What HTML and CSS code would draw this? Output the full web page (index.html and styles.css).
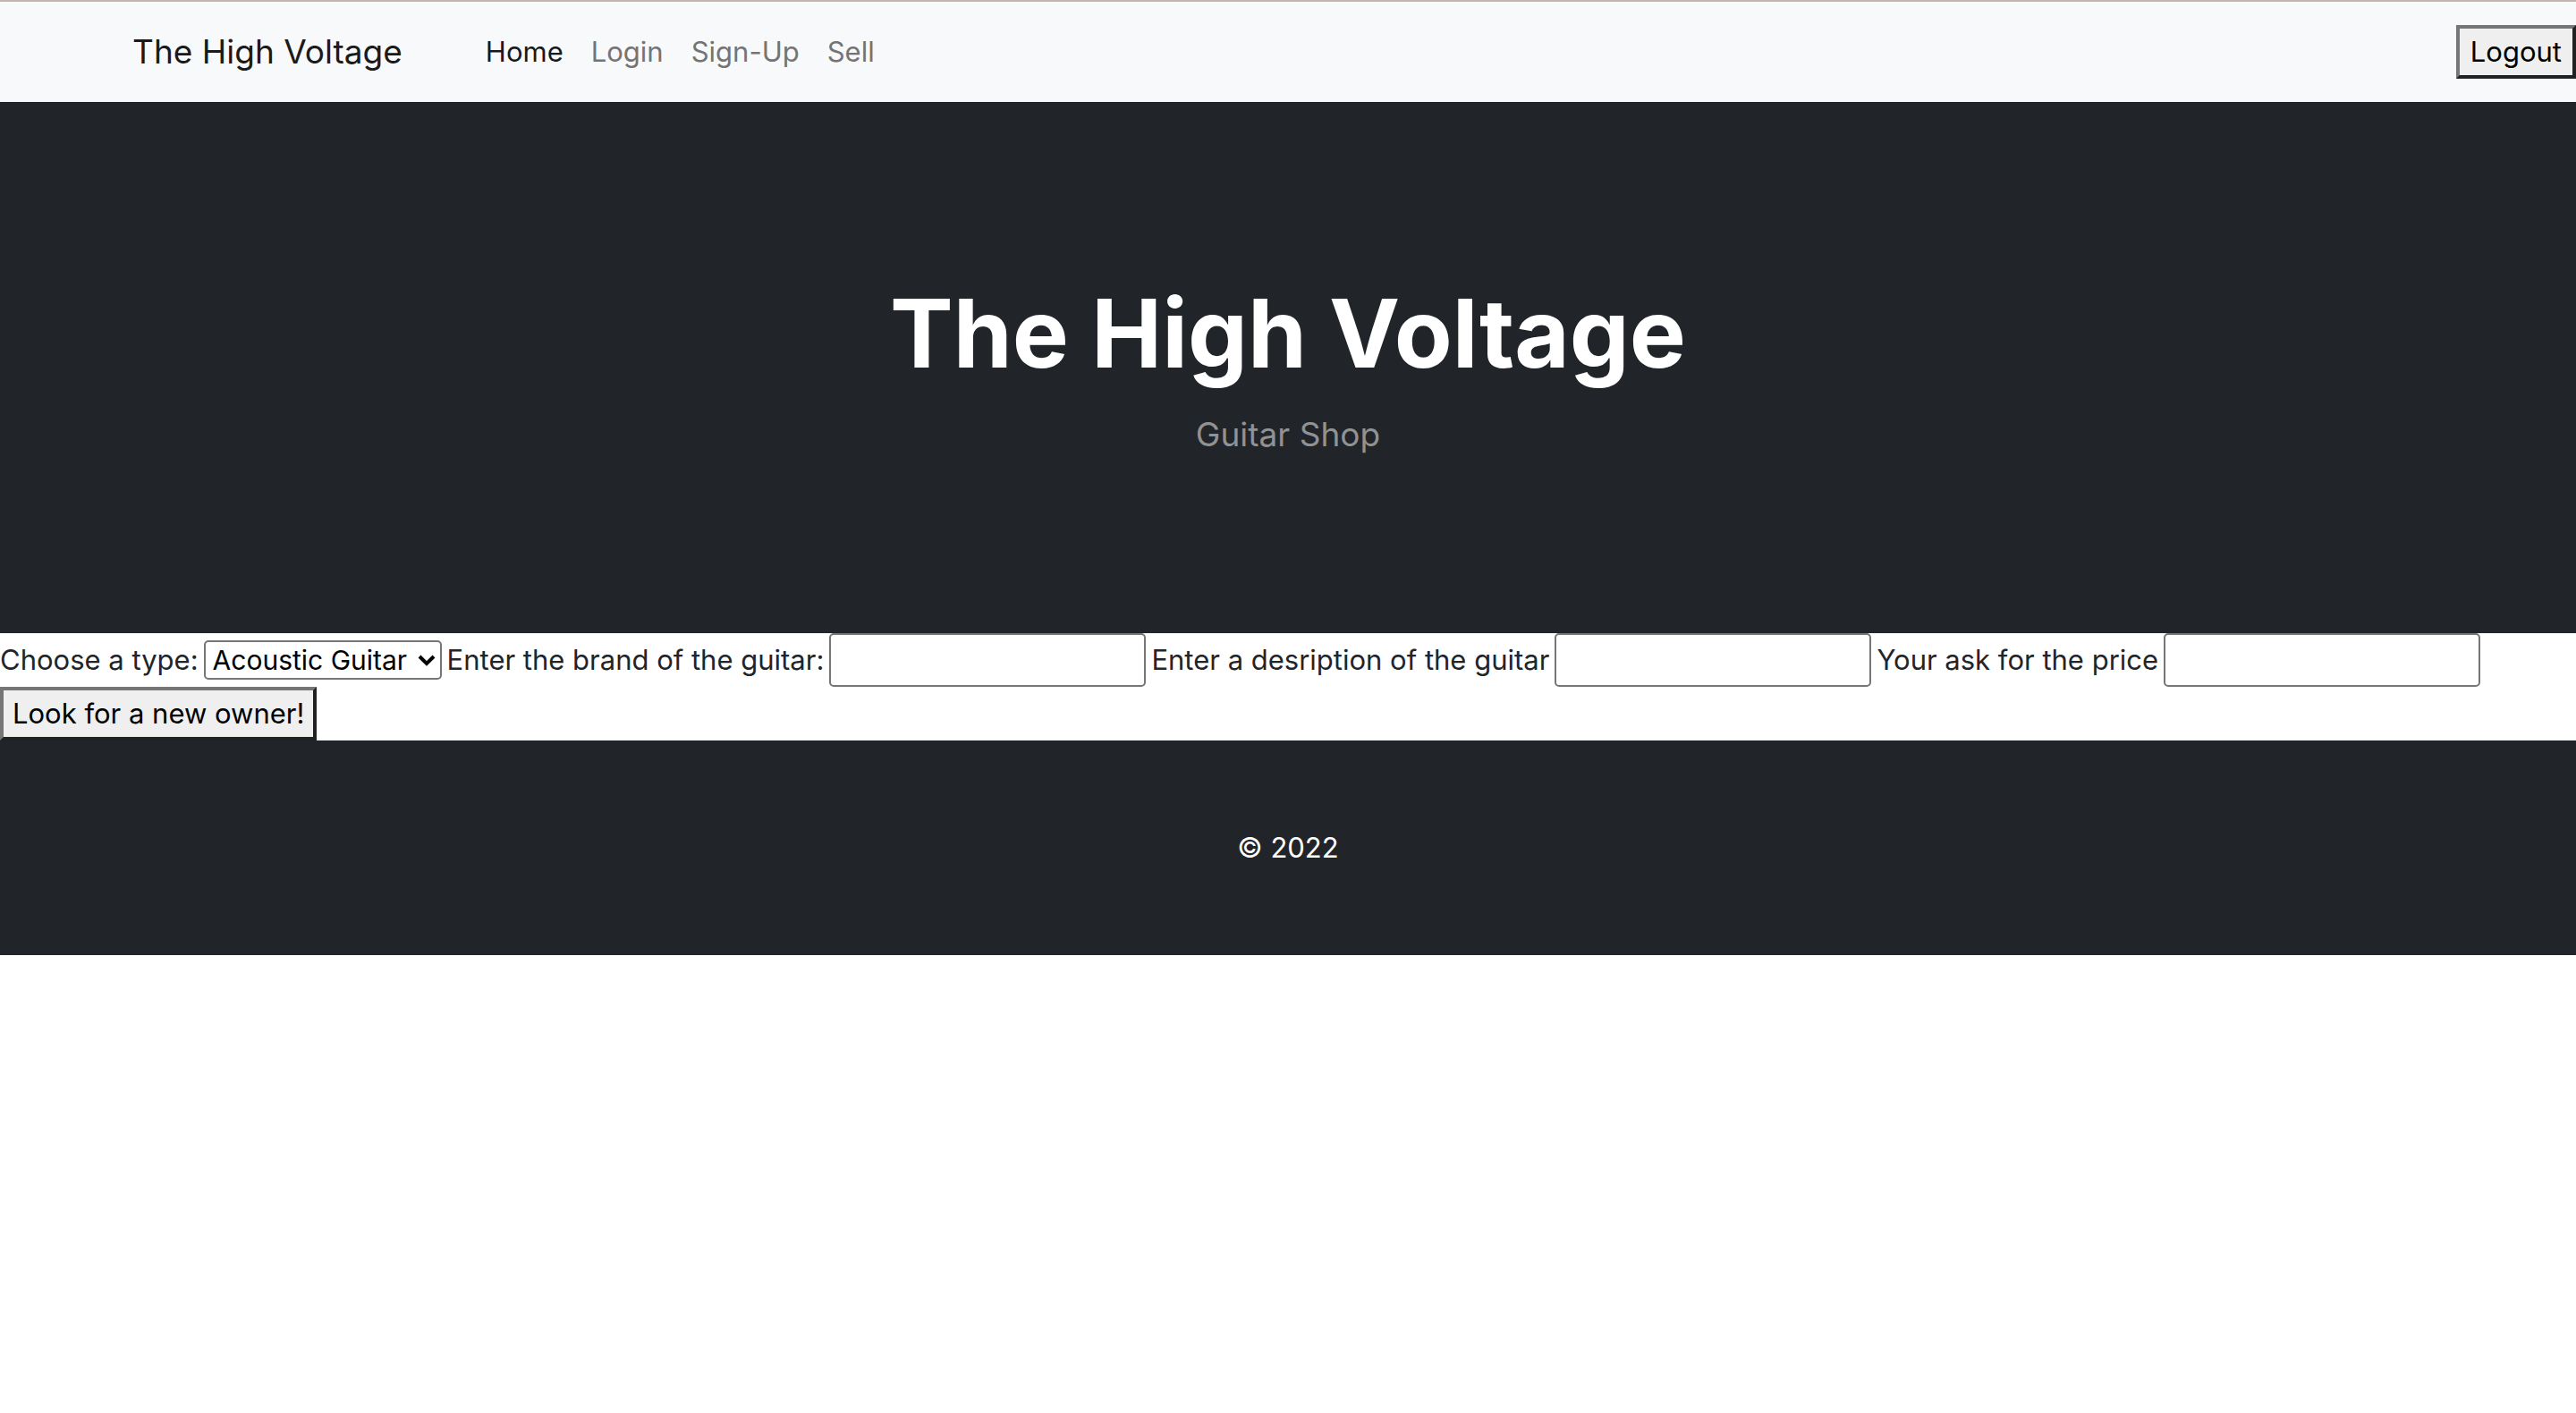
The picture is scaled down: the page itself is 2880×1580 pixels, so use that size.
FILE: index.html
```html
<!DOCTYPE html>
<html lang="en">
<head>
<meta charset="utf-8">
<meta name="viewport" content="width=device-width, initial-scale=1">
<title>The High Voltage</title>
<link rel="stylesheet" href="styles.css">
</head>
<body>
<nav class="navbar">
  <a class="brand" href="#">The High Voltage</a>
  <ul class="nav-links">
    <li><a class="nav-link active" href="#" aria-current="page">Home</a></li>
    <li><a class="nav-link" href="#">Login</a></li>
    <li><a class="nav-link" href="#">Sign-Up</a></li>
    <li><a class="nav-link" href="#">Sell</a></li>
  </ul>
  <button class="btn btn-logout" type="button">Logout</button>
</nav>
<header class="hero">
  <h1 class="hero-title">The High Voltage</h1>
  <p class="hero-lead">Guitar Shop</p>
</header>
<form class="sell-form">
  <label for="type">Choose a type:</label>
  <span class="select-wrap">
    <select class="select" id="type">
      <option>Acoustic Guitar</option>
      <option>Electric Guitar</option>
    </select>
    <svg class="chevron" viewBox="0 0 20 14" aria-hidden="true"><path d="M2 3l8 8 8-8"/></svg>
  </span>
  <label for="brand">Enter the brand of the guitar:</label>
  <input class="field" id="brand" type="text">
  <label for="description">Enter a desription of the guitar</label>
  <input class="field" id="description" type="text">
  <label for="price">Your ask for the price</label>
  <input class="field" id="price" type="text">
  <button class="btn btn-submit" type="submit">Look for a new owner!</button>
</form>
<footer class="footer"><p class="copyright">© 2022</p></footer>
</body>
</html>
```
FILE: styles.css
```css
* {
  box-sizing: border-box;
}

body {
  margin: 0;
  background: #fff;
  color: #212529;
  font-family: Inter, "Liberation Sans", sans-serif;
  font-size: 31px;
  line-height: 48px;
}

a {
  text-decoration: none;
}

.navbar {
  display: flex;
  align-items: center;
  min-height: 114px;
  padding-left: 148px;
  border-top: 2px solid #c4b5b0;
  background: #f8f9fa;
}

.brand {
  margin-right: 93px;
  color: #1a1a1a;
  font-size: 37px;
}

.nav-links {
  display: flex;
  gap: 31px;
  margin: 0;
  padding: 0;
  list-style: none;
}

.nav-link {
  color: #747475;
}

.nav-link.active {
  color: #18191a;
}

.btn {
  height: 60px;
  padding: 0 12px;
  border: 4px solid;
  border-color: #767676 #212121 #212121 #767676;
  background: #efefef;
  color: #000;
  font: inherit;
}

.btn-logout {
  margin-left: auto;
}

.btn-submit {
  padding: 0 10px;
}

.hero {
  padding: 192px 32px;
  background: #212529;
  color: #fff;
  text-align: center;
}

.hero-title {
  margin: 0 0 16px;
  font-size: 106px;
  font-weight: 700;
  line-height: 134px;
}

.hero-lead {
  margin: 0;
  color: #909294;
  font-size: 37px;
  line-height: 60px;
}

.sell-form {
  display: flex;
  flex-wrap: wrap;
  align-items: center;
  column-gap: 6px;
}

.select-wrap {
  position: relative;
}

.select {
  display: block;
  width: 266px;
  height: 44px;
  padding: 0 8px;
  border: 2px solid #767676;
  border-radius: 5px;
  background: #fff;
  color: #000;
  font: inherit;
  font-size: 30px;
  line-height: 38px;
  appearance: none;
}

.chevron {
  position: absolute;
  top: 15px;
  right: 7px;
  width: 20px;
  height: 14px;
  fill: none;
  stroke: #000;
  stroke-width: 4;
  pointer-events: none;
}

.field {
  width: 354px;
  height: 60px;
  padding: 2px 4px;
  border: 2px solid #767676;
  border-radius: 5px;
  background: #fff;
  color: #000;
  font: inherit;
}

.footer {
  padding: 96px 32px;
  background: #212529;
  color: #fff;
  text-align: center;
}

.copyright {
  margin: 0;
}
```
